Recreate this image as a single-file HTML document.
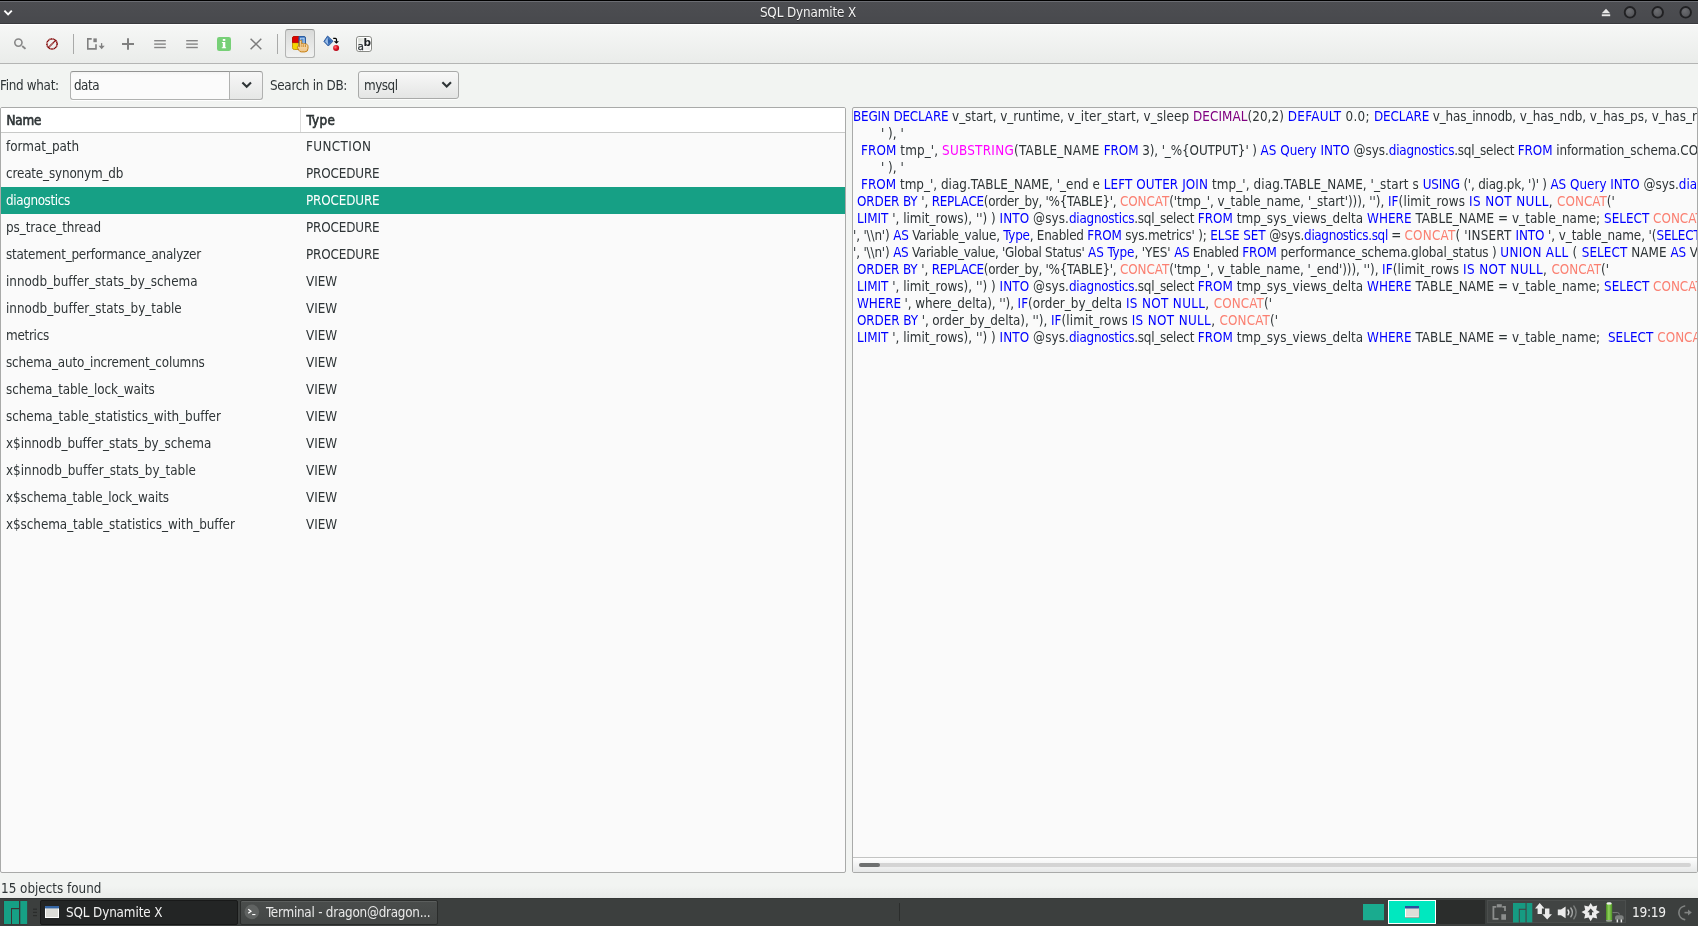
<!DOCTYPE html>
<html lang="en">
<head>
<meta charset="utf-8">
<title>SQL Dynamite X</title>
<style>
html,body{margin:0;padding:0;}
body{width:1698px;height:926px;overflow:hidden;position:relative;background:#f2f4f2;
 font-family:"DejaVu Sans Condensed","DejaVu Sans","Liberation Sans",sans-serif;font-size:13.33px;font-stretch:condensed;color:#2e3436;}
#root{position:absolute;left:0;top:0;width:1698px;height:926px;overflow:hidden;will-change:transform;background:#f2f4f2;}
.abs{position:absolute;}
svg{position:absolute;overflow:visible;}
#titlebar{left:0;top:0;width:1698px;height:24px;background:linear-gradient(#4d4e52,#48494d);box-sizing:border-box;border-top:1px solid #000;border-bottom:1px solid #38393c;}
#titlebar .hl{left:0;top:0;width:1698px;height:1px;background:#6b6d73;}
#title{left:0;width:1616px;top:4px;text-align:center;color:#f4f4f4;text-shadow:0 1px 0 #2c2c2e;line-height:16px;white-space:pre;letter-spacing:-0.12px;}
#toolbar{left:0;top:24px;width:1698px;height:38px;background:linear-gradient(#f6f7f6,#eaecea);border-top:1px solid #fff;border-bottom:1px solid #b4b5b4;}
#togbtn{left:285px;top:4px;width:28px;height:27px;border:1px solid #b3b4b3;border-top-color:#8f908f;border-radius:3px;background:linear-gradient(#d9dad9,#f1f2f1);}
.lbl{white-space:pre;line-height:16px;}
#entry{left:70px;top:71px;width:160px;height:29px;box-sizing:border-box;border:1px solid #b0b1b0;border-right:none;border-radius:3px 0 0 3px;background:linear-gradient(#f4f4f4,#fbfbfb 3px,#fbfbfb);border-top-color:#939493;box-shadow:0 1px 0 rgba(255,255,255,0.9);}
#entry span{position:absolute;left:3px;top:6px;line-height:16px;letter-spacing:-0.5px;}
#cbtn{left:229px;top:71px;width:34px;height:29px;box-sizing:border-box;border:1px solid #b0b1b0;border-radius:0 3px 3px 0;background:linear-gradient(#f7f7f7,#e6e7e6);border-top-color:#939493;box-shadow:0 1px 0 rgba(255,255,255,0.9);}
#dbsel{left:358px;top:71px;width:101px;height:28px;box-sizing:border-box;border:1px solid #a9aaa9;border-radius:3px;background:linear-gradient(#f8f8f8,#e4e5e4);box-shadow:0 1px 0 rgba(255,255,255,0.7);}
#dbsel span{position:absolute;left:5px;top:6px;line-height:16px;letter-spacing:-0.5px;}
#list{left:0;top:107px;width:846px;height:766px;box-sizing:border-box;border:1px solid #a9aaa9;background:#fafafa;border-radius:2px;overflow:hidden;}
#list .hdr{left:0;top:0;width:844px;height:24px;background:#fff;border-bottom:1px solid #c8c9c8;}
#list .hdr b{position:absolute;top:5px;line-height:16px;font-weight:normal;-webkit-text-stroke:0.6px #2e3436;}
#list .coldiv{left:299px;top:0;width:1px;height:24px;background:#dcdcdc;}
.row{position:absolute;left:0;width:844px;height:27px;}
.row span{position:absolute;top:6px;line-height:16px;white-space:pre;}
.row .n{left:5px;}
.row .t{left:305px;}
.row.sel{background:#16a085;color:#fff;}
#sql{left:852px;top:107px;width:846px;height:766px;box-sizing:border-box;border:1px solid #a9aaa9;background:#fafafa;overflow:hidden;border-radius:2px;}
#sql .ln{position:absolute;height:17px;line-height:17px;white-space:pre;color:#2e3436;}
.k{color:#0000ff;}.d{color:#800080;}.f{color:#ff00ff;}.c{color:#fa8072;}
#hscroll{left:0;top:749px;width:844px;height:15px;border-top:1px solid #c3c4c3;background:linear-gradient(#fdfdfd,#e5e7e7);}
#hscroll .tr{left:6px;top:5px;width:832px;height:4px;background:#d4d4d4;border-radius:2px;}
#hscroll .th{left:6px;top:5px;width:21px;height:4px;border-radius:2px;background:#6e7070;}
#status{left:1px;top:881px;line-height:16px;white-space:pre;}
#taskbar{left:0;top:898px;width:1698px;height:28px;background:#3c3f3e;color:#f0f0f0;}
.tbtn{position:absolute;top:2px;height:25px;box-sizing:border-box;border-radius:2px;}
.tbtn span{position:absolute;top:4px;line-height:16px;white-space:pre;color:#f2f2f2;}
#tb1{left:40px;width:198px;background:#232525;border:1px solid #181919;}
#tb2{left:240px;width:198px;background:linear-gradient(#4a4d4c,#434645);border:1px solid #2a2c2b;box-shadow:inset 0 1px 0 #5b5e5d;}
#clock{left:1632px;top:6px;line-height:16px;font-size:13.6px;color:#f0f0f0;letter-spacing:-0.3px;}
</style>
</head>
<body>
<div id="root">
<div id="titlebar" class="abs"><div class="hl abs"></div><div id="title" class="abs">SQL Dynamite X</div>
<svg style="left:0;top:-1px" width="1698" height="24" viewBox="0 0 1698 24">
 <path d="M4.4 10.6 L8.1 14.3 L11.8 10.6" fill="none" stroke="#fff" stroke-width="1.9"/>
 <path d="M1601.8 13.3 L1606 8.7 L1610.2 13.3 Z" fill="#e8e8e8"/><rect x="1601.8" y="14.3" width="8.4" height="1.9" fill="#e8e8e8"/>
 <defs><radialGradient id="wb" cx="0.4" cy="0.35" r="0.7"><stop offset="0" stop-color="#6c6d71"/><stop offset="1" stop-color="#505155"/></radialGradient></defs>
 <g stroke="#212123" stroke-width="1.9" fill="url(#wb)"><circle cx="1630" cy="12.3" r="5.3"/><circle cx="1657.7" cy="12.3" r="5.3"/><circle cx="1685.7" cy="12.3" r="5.3"/></g>
</svg>
</div>
<div id="toolbar" class="abs"><div id="togbtn" class="abs"></div>
<svg id="tbicons" style="left:0;top:-25px" width="420" height="64" viewBox="0 0 420 64">
<defs>
 <linearGradient id="gBlue" x1="0" y1="0" x2="1" y2="1"><stop offset="0" stop-color="#3f75bf"/><stop offset="1" stop-color="#8ab6e6"/></linearGradient>
 <linearGradient id="gDia" x1="0" y1="0" x2="1" y2="0"><stop offset="0" stop-color="#2f5f9f"/><stop offset="0.45" stop-color="#3c70b4"/><stop offset="0.5" stop-color="#7ea9dc"/><stop offset="1" stop-color="#4a7fc0"/></linearGradient>
 <radialGradient id="gRed" cx="0.38" cy="0.35" r="0.7"><stop offset="0" stop-color="#ff7b7b"/><stop offset="0.5" stop-color="#e01525"/><stop offset="1" stop-color="#a80010"/></radialGradient>
 <linearGradient id="gAb" x1="0" y1="0" x2="1" y2="1"><stop offset="0" stop-color="#d3d7cf"/><stop offset="0.55" stop-color="#fdfdfd"/><stop offset="1" stop-color="#dfe0dc"/></linearGradient>
 <linearGradient id="gHand" x1="0" y1="0" x2="0" y2="1"><stop offset="0" stop-color="#fbe6c4"/><stop offset="1" stop-color="#eec486"/></linearGradient>
</defs>
<!-- search -->
<circle cx="18.4" cy="42.6" r="3.6" fill="none" stroke="#878787" stroke-width="1.6"/>
<path d="M22.2 46 L25.5 48.9" stroke="#878787" stroke-width="1.9" fill="none"/>
<!-- forbidden -->
<circle cx="52" cy="44" r="5.1" fill="none" stroke="#800000" stroke-width="1.5" stroke-dasharray="1.2 0.4"/>
<path d="M48.3 47.7 L55.7 40.3" stroke="#800000" stroke-width="1.5" stroke-dasharray="1.2 0.4" fill="none"/>
<!-- separators -->
<rect x="73" y="34" width="1" height="20" fill="#a9aaa9"/>
<rect x="277" y="34" width="1" height="20" fill="#a9aaa9"/>
<!-- paste -->
<path d="M91.7 38.9 H87.8 V48.9 H96 V44.2" fill="none" stroke="#808080" stroke-width="1.6"/>
<rect x="93.4" y="38.4" width="3.4" height="3.8" fill="#808080"/>
<path d="M101.6 43.1 V47" stroke="#808080" stroke-width="1.3" fill="none"/>
<path d="M98.6 45.7 H104.7 L101.65 49.2 Z" fill="#808080"/>
<!-- plus -->
<path d="M122 44 H134 M128 38.2 V49.8" stroke="#808080" stroke-width="2" fill="none"/>
<!-- hamburgers -->
<g fill="#858585">
<rect x="154.2" y="40" width="11.6" height="1.4"/><rect x="154.2" y="43.4" width="11.6" height="1.4"/><rect x="154.2" y="46.8" width="11.6" height="1.4"/>
<rect x="186.2" y="40" width="11.6" height="1.4"/><rect x="186.2" y="43.4" width="11.6" height="1.4"/><rect x="186.2" y="46.8" width="11.6" height="1.4"/>
</g>
<!-- info -->
<rect x="217" y="37" width="14" height="14" rx="2.2" fill="#77d077"/>
<rect x="222.8" y="39" width="2.5" height="1.9" fill="#fff"/>
<path d="M221.9 42 H225.3 V47.2 H226.1 V48.3 H221.8 V47.2 H222.8 V43.1 H221.9 Z" fill="#fff"/>
<!-- close x -->
<path d="M250.6 38.7 L261.3 49.3 M261.3 38.7 L250.6 49.3" stroke="#7c7c7c" stroke-width="1.5" fill="none"/>
<!-- colour + hand -->
<rect x="292.5" y="36.5" width="13" height="13" rx="1.8" fill="#f3d500" stroke="#c89a10" stroke-width="1"/>
<path d="M294 36.5 H299 V42.6 H292.5 V38 Q292.5 36.5 294 36.5 Z" fill="#dd0000" stroke="#b00000" stroke-width="0.8"/>
<path d="M299 36.5 H304 Q305.5 36.5 305.5 38 V46 H299 Z" fill="url(#gBlue)" stroke="#2a5ca4" stroke-width="1"/>
<rect x="300.6" y="38.3" width="3.4" height="5" fill="none" stroke="#b9d6f2" stroke-width="0.7"/>
<path d="M299.7 46.8 V41.4 Q299.7 40.3 300.7 40.3 Q301.7 40.3 301.7 41.4 V44 Q302.5 43.1 303.5 43.8 Q304.4 43.2 305.3 44 Q306.4 43.6 307.2 44.5 Q308 45.3 308 46.5 V48.5 Q308 51.9 304.8 51.9 H301.5 Q299.8 51.9 298.9 50.4 L297.5 47.8 Q297 46.8 297.8 46.3 Q298.6 45.9 299.2 46.6 Z" fill="url(#gHand)" stroke="#c78014" stroke-width="1" stroke-linejoin="round"/>
<path d="M301.9 44.4 V47 M303.7 44.4 V47 M305.5 44.8 V47" stroke="#c78014" stroke-width="0.8" fill="none"/>
<!-- diamond + arrow + ball -->
<path d="M327.6 36 L333 41.2 L328.3 46 L323.9 41.4 Z" fill="#4478bd" stroke="#2a589c" stroke-width="0.9" stroke-linejoin="round"/>
<path d="M327.6 37.2 L328.1 44.8 L325 41.4 Z" fill="#9dbfe8"/>
<path d="M328 38.6 L331 41.2 L328.2 43.8 Z" fill="#2c60ab"/>
<path d="M333.2 38.4 H335.4 Q336.5 38.4 336.5 39.6 V41.6" fill="none" stroke="#000" stroke-width="1.2"/>
<path d="M333.8 41.2 H339 L336.4 43.8 Z" fill="#000"/>
<circle cx="336.1" cy="48.1" r="3" fill="url(#gRed)"/>
<!-- ab -->
<rect x="356.5" y="36.5" width="15" height="15" rx="2.4" fill="#fff" stroke="#888a85" stroke-width="1"/>
<rect x="358.2" y="38.2" width="11.6" height="11.6" fill="url(#gAb)"/>
<text style="font-stretch:normal" x="357.6" y="49.9" font-family="'DejaVu Sans','Liberation Sans',sans-serif" font-size="10.5" fill="#2e3436" stroke="#2e3436" stroke-width="0.25">a</text>
<text style="font-stretch:normal" x="363.4" y="45.8" font-family="'DejaVu Sans','Liberation Sans',sans-serif" font-weight="bold" font-size="10.5" fill="#1c2022">b</text>

</svg>
</div>
<div class="abs lbl" style="left:0px;top:78px;letter-spacing:-0.3px">Find what:</div>
<div id="entry" class="abs"><span>data</span></div>
<div id="cbtn" class="abs"><svg style="left:0;top:0" width="32" height="27"><path d="M12.4 10.4 L16.7 14.7 L21 10.4" fill="none" stroke="#2e3436" stroke-width="2.1"/></svg></div>
<div class="abs lbl" style="left:270px;top:78px;letter-spacing:-0.32px">Search in DB:</div>
<div id="dbsel" class="abs"><span>mysql</span><svg style="left:0;top:0" width="99" height="26"><path d="M83.4 10.2 L87.7 14.5 L92 10.2" fill="none" stroke="#2e3436" stroke-width="2.1"/></svg></div>
<div id="list" class="abs">
<div class="hdr abs"><b style="left:5.5px;letter-spacing:-0.15px">Name</b><b style="left:305.5px;letter-spacing:0.35px">Type</b><div class="coldiv abs"></div></div>
<div class="row" style="top:25px"><span class="n" id="n0" style="letter-spacing:-0.012px">format_path</span><span class="t ttFUNCTION" style="letter-spacing:0.377px">FUNCTION</span></div>
<div class="row" style="top:52px"><span class="n" id="n1" style="letter-spacing:-0.159px">create_synonym_db</span><span class="t ttPROCEDURE" style="letter-spacing:-0.153px">PROCEDURE</span></div>
<div class="row sel" style="top:79px"><span class="n" id="n2" style="letter-spacing:-0.370px">diagnostics</span><span class="t ttPROCEDURE" style="letter-spacing:-0.153px">PROCEDURE</span></div>
<div class="row" style="top:106px"><span class="n" id="n3" style="letter-spacing:-0.072px">ps_trace_thread</span><span class="t ttPROCEDURE" style="letter-spacing:-0.153px">PROCEDURE</span></div>
<div class="row" style="top:133px"><span class="n" id="n4" style="letter-spacing:-0.230px">statement_performance_analyzer</span><span class="t ttPROCEDURE" style="letter-spacing:-0.153px">PROCEDURE</span></div>
<div class="row" style="top:160px"><span class="n" id="n5" style="letter-spacing:-0.009px">innodb_buffer_stats_by_schema</span><span class="t ttVIEW" style="letter-spacing:-0.018px">VIEW</span></div>
<div class="row" style="top:187px"><span class="n" id="n6" style="letter-spacing:0.015px">innodb_buffer_stats_by_table</span><span class="t ttVIEW" style="letter-spacing:-0.018px">VIEW</span></div>
<div class="row" style="top:214px"><span class="n" id="n7" style="letter-spacing:-0.266px">metrics</span><span class="t ttVIEW" style="letter-spacing:-0.018px">VIEW</span></div>
<div class="row" style="top:241px"><span class="n" id="n8" style="letter-spacing:-0.152px">schema_auto_increment_columns</span><span class="t ttVIEW" style="letter-spacing:-0.018px">VIEW</span></div>
<div class="row" style="top:268px"><span class="n" id="n9" style="letter-spacing:-0.093px">schema_table_lock_waits</span><span class="t ttVIEW" style="letter-spacing:-0.018px">VIEW</span></div>
<div class="row" style="top:295px"><span class="n" id="n10" style="letter-spacing:-0.034px">schema_table_statistics_with_buffer</span><span class="t ttVIEW" style="letter-spacing:-0.018px">VIEW</span></div>
<div class="row" style="top:322px"><span class="n" id="n11" style="letter-spacing:-0.044px">x$innodb_buffer_stats_by_schema</span><span class="t ttVIEW" style="letter-spacing:-0.018px">VIEW</span></div>
<div class="row" style="top:349px"><span class="n" id="n12" style="letter-spacing:-0.007px">x$innodb_buffer_stats_by_table</span><span class="t ttVIEW" style="letter-spacing:-0.018px">VIEW</span></div>
<div class="row" style="top:376px"><span class="n" id="n13" style="letter-spacing:-0.107px">x$schema_table_lock_waits</span><span class="t ttVIEW" style="letter-spacing:-0.018px">VIEW</span></div>
<div class="row" style="top:403px"><span class="n" id="n14" style="letter-spacing:-0.054px">x$schema_table_statistics_with_buffer</span><span class="t ttVIEW" style="letter-spacing:-0.018px">VIEW</span></div>

</div>
<div id="sql" class="abs">
<div class="ln" style="left:0px;top:0px"><span class="p" id="p0_0" style="letter-spacing:-0.171px"><span class="k">BEGIN DECLARE</span> </span><span class="p" id="p0_1" style="letter-spacing:-0.057px">v_start, v_runtime, </span><span class="p" id="p0_2" style="letter-spacing:0.077px">v_iter_start, v_sleep </span><span class="p" id="p0_3" style="letter-spacing:0.071px"><span class="d">DECIMAL</span>(20,2) </span><span class="p" id="p0_4" style="letter-spacing:0.288px"><span class="k">DEFAULT</span> 0.0; </span><span class="p" id="p0_5" style="letter-spacing:-0.154px"><span class="k">DECLARE</span> v_has_innodb, </span><span class="p" id="p0_6" style="letter-spacing:-0.049px">v_has_ndb, </span><span class="p" id="p0_7" style="letter-spacing:0.003px">v_has_ps, </span><span class="p" id="p0_8" style="letter-spacing:0.001px">v_has_replication, v_has_ps_replication <span class="d">VARCHAR</span>(8) <span class="k">CHARSET</span> utf8</span></div>
<div class="ln" style="left:28px;top:17px"><span class="p" id="p1_0" style="letter-spacing:0.000px">' ), '</span></div>
<div class="ln" style="left:8px;top:34px"><span class="p" id="p2_0" style="letter-spacing:0.107px"><span class="k">FROM</span> tmp_', </span><span class="p" id="p2_1" style="letter-spacing:0.276px"><span class="f">SUBSTRING</span>(TABLE_NAME </span><span class="p" id="p2_2" style="letter-spacing:-0.098px"><span class="k">FROM</span> 3), '_%{OUTPUT}' ) </span><span class="p" id="p2_3" style="letter-spacing:-0.008px"><span class="k">AS Query INTO</span> @sys.</span><span class="p" id="p2_4" style="letter-spacing:-0.235px"><span class="k">diagnostics</span>.sql_select </span><span class="p" id="p2_5" style="letter-spacing:-0.090px"><span class="k">FROM</span> information_schema.</span><span class="p" id="p2_6" style="letter-spacing:-0.008px">COLUMNS <span class="k">WHERE</span> TABLE_SCHEMA</span></div>
<div class="ln" style="left:28px;top:51px"><span class="p" id="p3_0" style="letter-spacing:0.000px">' ), '</span></div>
<div class="ln" style="left:8px;top:68px"><span class="p" id="p4_0" style="letter-spacing:0.022px"><span class="k">FROM</span> tmp_', diag.TABLE_NAME, '_end e </span><span class="p" id="p4_1" style="letter-spacing:0.099px"><span class="k">LEFT OUTER JOIN</span> tmp_', diag.TABLE_NAME, '_start s </span><span class="p" id="p4_2" style="letter-spacing:-0.214px"><span class="k">USING</span> (', diag.pk, ')' ) </span><span class="p" id="p4_3" style="letter-spacing:0.008px"><span class="k">AS Query INTO</span> @sys.</span><span class="p" id="p4_4" style="letter-spacing:-0.021px"><span class="k">diagnostics</span>.sql_select</span></div>
<div class="ln" style="left:4px;top:85px"><span class="p" id="p5_0" style="letter-spacing:-0.122px"><span class="k">ORDER BY</span> ', </span><span class="p" id="p5_1" style="letter-spacing:-0.290px"><span class="k">REPLACE</span>(order_by, '%{TABLE}', </span><span class="p" id="p5_2" style="letter-spacing:-0.056px"><span class="c">CONCAT</span>('tmp_', v_table_name, '_start'))), ''), </span><span class="p" id="p5_3" style="letter-spacing:0.134px"><span class="k">IF</span>(limit_rows </span><span class="p" id="p5_4" style="letter-spacing:0.368px"><span class="k">IS NOT NULL</span>, </span><span class="p" id="p5_5" style="letter-spacing:0.007px"><span class="c">CONCAT</span>('</span></div>
<div class="ln" style="left:4px;top:102px"><span class="p" id="p6_0" style="letter-spacing:0.004px"><span class="k">LIMIT</span> ', limit_rows), '') ) </span><span class="p" id="p6_1" style="letter-spacing:0.103px"><span class="k">INTO</span> @sys.</span><span class="p" id="p6_2" style="letter-spacing:-0.248px"><span class="k">diagnostics</span>.sql_select </span><span class="p" id="p6_3" style="letter-spacing:0.034px"><span class="k">FROM</span> tmp_sys_views_delta </span><span class="p" id="p6_4" style="letter-spacing:0.057px"><span class="k">WHERE</span> TABLE_NAME = v_table_name; </span><span class="p" id="p6_5" style="letter-spacing:0.007px"><span class="k">SELECT</span> </span><span class="p" id="p6_6" style="letter-spacing:-0.007px"><span class="c">CONCAT</span>(<span class="k">IF</span>(</span></div>
<div class="ln" style="left:0px;top:119px"><span class="p" id="p7_0" style="letter-spacing:-0.147px">', '\\n') </span><span class="p" id="p7_1" style="letter-spacing:-0.229px"><span class="k">AS</span> Variable_value, </span><span class="p" id="p7_2" style="letter-spacing:-0.231px"><span class="k">Type</span>, Enabled </span><span class="p" id="p7_3" style="letter-spacing:-0.177px"><span class="k">FROM</span> sys.metrics' ); </span><span class="p" id="p7_4" style="letter-spacing:-0.083px"><span class="k">ELSE SET</span> @sys.</span><span class="p" id="p7_5" style="letter-spacing:-0.347px"><span class="k">diagnostics.sql</span> = </span><span class="p" id="p7_6" style="letter-spacing:0.211px"><span class="c">CONCAT</span>( 'INSERT </span><span class="p" id="p7_7" style="letter-spacing:-0.089px"><span class="k">INTO</span> ', v_table_name, '(</span><span class="p" id="p7_8" style="letter-spacing:-0.137px"><span class="k">SELECT</span> Variable_name</span></div>
<div class="ln" style="left:0px;top:136px"><span class="p" id="p8_0" style="letter-spacing:-0.147px">', '\\n') </span><span class="p" id="p8_1" style="letter-spacing:-0.292px"><span class="k">AS</span> Variable_value, 'Global Status' </span><span class="p" id="p8_2" style="letter-spacing:-0.093px"><span class="k">AS Type</span>, 'YES' </span><span class="p" id="p8_3" style="letter-spacing:-0.338px"><span class="k">AS</span> Enabled </span><span class="p" id="p8_4" style="letter-spacing:-0.151px"><span class="k">FROM</span> performance_schema.global_status ) </span><span class="p" id="p8_5" style="letter-spacing:0.346px"><span class="k">UNION ALL</span> ( </span><span class="p" id="p8_6" style="letter-spacing:0.062px"><span class="k">SELECT</span> NAME </span><span class="p" id="p8_7" style="letter-spacing:-0.088px"><span class="k">AS</span> Variable_name</span></div>
<div class="ln" style="left:4px;top:153px"><span class="p" id="p9_0" style="letter-spacing:-0.122px"><span class="k">ORDER BY</span> ', </span><span class="p" id="p9_1" style="letter-spacing:-0.290px"><span class="k">REPLACE</span>(order_by, '%{TABLE}', </span><span class="p" id="p9_2" style="letter-spacing:-0.069px"><span class="c">CONCAT</span>('tmp_', v_table_name, '_end'))), ''), </span><span class="p" id="p9_3" style="letter-spacing:0.119px"><span class="k">IF</span>(limit_rows </span><span class="p" id="p9_4" style="letter-spacing:0.391px"><span class="k">IS NOT NULL</span>, </span><span class="p" id="p9_5" style="letter-spacing:0.006px"><span class="c">CONCAT</span>('</span></div>
<div class="ln" style="left:4px;top:170px"><span class="p" id="p10_0" style="letter-spacing:0.004px"><span class="k">LIMIT</span> ', limit_rows), '') ) </span><span class="p" id="p10_1" style="letter-spacing:0.103px"><span class="k">INTO</span> @sys.</span><span class="p" id="p10_2" style="letter-spacing:-0.248px"><span class="k">diagnostics</span>.sql_select </span><span class="p" id="p10_3" style="letter-spacing:0.034px"><span class="k">FROM</span> tmp_sys_views_delta </span><span class="p" id="p10_4" style="letter-spacing:0.057px"><span class="k">WHERE</span> TABLE_NAME = v_table_name; </span><span class="p" id="p10_5" style="letter-spacing:0.007px"><span class="k">SELECT</span> </span><span class="p" id="p10_6" style="letter-spacing:-0.007px"><span class="c">CONCAT</span>(<span class="k">IF</span>(</span></div>
<div class="ln" style="left:4px;top:187px"><span class="p" id="p11_0" style="letter-spacing:-0.101px"><span class="k">WHERE</span> ', where_delta), ''), </span><span class="p" id="p11_1" style="letter-spacing:0.019px"><span class="k">IF</span>(order_by_delta </span><span class="p" id="p11_2" style="letter-spacing:0.352px"><span class="k">IS NOT NULL</span>, </span><span class="p" id="p11_3" style="letter-spacing:0.090px"><span class="c">CONCAT</span>('</span></div>
<div class="ln" style="left:4px;top:204px"><span class="p" id="p12_0" style="letter-spacing:-0.075px"><span class="k">ORDER BY</span> ', order_by_delta), ''), </span><span class="p" id="p12_1" style="letter-spacing:0.105px"><span class="k">IF</span>(limit_rows </span><span class="p" id="p12_2" style="letter-spacing:0.352px"><span class="k">IS NOT NULL</span>, </span><span class="p" id="p12_3" style="letter-spacing:0.127px"><span class="c">CONCAT</span>('</span></div>
<div class="ln" style="left:4px;top:221px"><span class="p" id="p13_0" style="letter-spacing:0.004px"><span class="k">LIMIT</span> ', limit_rows), '') ) </span><span class="p" id="p13_1" style="letter-spacing:0.103px"><span class="k">INTO</span> @sys.</span><span class="p" id="p13_2" style="letter-spacing:-0.248px"><span class="k">diagnostics</span>.sql_select </span><span class="p" id="p13_3" style="letter-spacing:0.034px"><span class="k">FROM</span> tmp_sys_views_delta </span><span class="p" id="p13_4" style="letter-spacing:0.056px"><span class="k">WHERE</span> TABLE_NAME = v_table_name;  </span><span class="p" id="p13_5" style="letter-spacing:0.064px"><span class="k">SELECT</span> </span><span class="p" id="p13_6" style="letter-spacing:0.002px"><span class="c">CONCAT</span>(<span class="k">IF</span>(</span></div>

<div id="hscroll" class="abs"><div class="tr abs"></div><div class="th abs"></div></div></div>
<div class="abs" style="left:0;top:886px;width:1698px;height:12px;background:linear-gradient(#f2f4f2,#e9ebe9)"></div>
<div id="status" class="abs">15 objects found</div>
<div id="taskbar" class="abs">
<div class="abs" style="left:0;top:0;width:1698px;height:1px;background:#343737"></div>
<div id="tb1" class="tbtn"><span style="left:25px;letter-spacing:-0.12px">SQL Dynamite X</span></div>
<div id="tb2" class="tbtn"><span style="left:25px;letter-spacing:-0.23px;color:#e9e9e9">Terminal - dragon@dragon...</span></div>
<div class="abs" style="left:1363px;top:6px;width:21px;height:17px;background:#1aab8f;border-bottom:1px solid #2c5a50;box-sizing:border-box"></div>
<div class="abs" style="left:1388px;top:2px;width:48px;height:24px;background:#00e8bf;border:1px solid #fff;box-sizing:border-box"></div>
<div class="abs" style="left:1436px;top:2px;width:49px;height:24px;background:#2b2d2c"></div>
<div class="abs" style="left:1487px;top:2px;width:139px;height:23px;box-sizing:border-box;border:1px solid #4b4e4d;background:#414443"></div>
<div id="clock" class="abs">19:19</div>
<svg style="left:0;top:-898px" width="1698" height="926" viewBox="0 0 1698 926">
<defs>
 <linearGradient id="gBat" x1="0" y1="0" x2="1" y2="0"><stop offset="0" stop-color="#4b8f22"/><stop offset="0.45" stop-color="#8fd15a"/><stop offset="1" stop-color="#4d9424"/></linearGradient>
</defs>
<!-- manjaro logo -->
<rect x="3.5" y="900.5" width="24" height="24" fill="#3a3433"/>
<g fill="#16a085"><path d="M4 901 H19 V908 H11 V924 H4 Z"/><rect x="12" y="909.2" width="7" height="14.8"/><rect x="20.3" y="901" width="6.9" height="23"/></g>
<!-- handle -->
<g fill="#2a2c2b"><rect x="33" y="908.6" width="4" height="1.2"/><rect x="33" y="911.8" width="4" height="1.2"/><rect x="33" y="915" width="4" height="1.2"/></g>
<!-- window icon -->
<rect x="45.5" y="906.5" width="13" height="11" fill="#dcdcd8" stroke="#fff" stroke-width="1"/><rect x="45" y="906" width="14" height="2.4" fill="#3465a4"/>
<!-- terminal icon -->
<circle cx="251.8" cy="911.9" r="7.3" fill="#606362"/>
<path d="M248.3 909.3 L251 911.3 L248.3 913.3" fill="none" stroke="#fff" stroke-width="1.2"/><rect x="252.2" y="914" width="3.2" height="1.1" fill="#fff"/>
<!-- separator -->
<rect x="899" y="903" width="1" height="18" fill="#2b2d2c"/>
<!-- mini window in workspace 2 -->
<rect x="1405.5" y="906.5" width="13" height="10.6" fill="#deded8" stroke="#fff" stroke-width="1"/><rect x="1405" y="906" width="14" height="2.5" fill="#2a4fa0"/><path d="M1405 917.6 H1419 V908.5" fill="none" stroke="#a87070" stroke-width="0.6"/>
<!-- clipboard -->
<g fill="none" stroke="#8b8d8c" stroke-width="1.8"><path d="M1496.3 906.8 H1493.4 V918.9 H1498.5"/><path d="M1502.3 906.8 H1505 V911"/></g>
<rect x="1496.8" y="904.2" width="5" height="3.2" fill="#8b8d8c"/><rect x="1501.3" y="914.2" width="4.7" height="5.6" fill="#8b8d8c"/>
<!-- manjaro tray -->
<g fill="#169b82"><path d="M1513 903 H1525.5 V908.8 H1518.8 V922.4 H1513 Z"/><rect x="1519.8" y="909.8" width="5.7" height="12.6"/><rect x="1526.6" y="903" width="5.7" height="19.4"/></g>
<!-- up/down arrows -->
<g fill="#ebebeb"><path d="M1539.7 903 L1544.5 908.4 H1541.9 V914 H1537.6 V908.4 H1535 Z"/><path d="M1547.2 919.4 L1542.3 914.2 H1545 V908.4 H1549.4 V914.2 H1552 Z"/></g>
<!-- volume -->
<path d="M1557.8 909.6 H1561 L1565.6 906.6 V918.2 L1561 915.2 H1557.8 Z" fill="#ebebeb"/>
<g fill="none" stroke-linecap="round"><path d="M1568 910 Q1569.8 912.4 1568 914.8" stroke="#e4e4e4" stroke-width="1.4"/><path d="M1570.8 908 Q1574 912.4 1570.8 916.8" stroke="#a8aaa9" stroke-width="1.4"/><path d="M1573.8 906 Q1578.6 912.4 1573.8 918.8" stroke="#7a7d7c" stroke-width="1.4"/></g>
<!-- gear -->
<path id="gear" fill="#ececec" d="M1590.7 902.9 L1592.9 906.6 L1597.2 905.6 L1596.2 909.9 L1599.9 912.1 L1596.2 914.3 L1597.2 918.6 L1592.9 917.6 L1590.7 921.3 L1588.5 917.6 L1584.2 918.6 L1585.2 914.3 L1581.5 912.1 L1585.2 909.9 L1584.2 905.6 L1588.5 906.6 Z"/>
<circle cx="1590.7" cy="912.1" r="5.2" fill="#ececec"/>
<path d="M1590.7 908.6 L1594 912.3 H1592 V915.2 H1589.4 V912.3 H1587.4 Z" fill="#3f4241"/>
<!-- battery -->
<rect x="1606" y="902.8" width="6.2" height="18.6" rx="1.6" fill="url(#gBat)"/><ellipse cx="1609.1" cy="903.4" rx="2.6" ry="1.2" fill="#f0f0f0"/>
<rect x="1606" y="920" width="6.2" height="1.6" rx="0.8" fill="#9a9c9b"/>
<path d="M1612.6 912.6 H1617.5 Q1619.3 912.6 1619.3 914.6" fill="none" stroke="#8a8c8b" stroke-width="0.8"/>
<path d="M1615 918 Q1615 915.2 1617.5 915.2 H1621.2 Q1623.7 915.2 1623.7 918 V919.4 H1615 Z" fill="#7d807f"/><rect x="1616.6" y="919.4" width="1.5" height="3" fill="#e8e8e8"/><rect x="1620.6" y="919.4" width="1.5" height="3" fill="#e8e8e8"/>
<!-- logout -->
<path d="M1684.6 906 A6.9 6.9 0 0 0 1684.6 919.6" fill="none" stroke="#808382" stroke-width="1.6" stroke-linecap="round"/>
<path d="M1684.5 912.6 H1689" stroke="#808382" stroke-width="1.6" fill="none"/><path d="M1688 909.6 L1691.8 912.6 L1688 915.6 Z" fill="#808382"/>
</svg>

</div>
</div>
</body>
</html>
